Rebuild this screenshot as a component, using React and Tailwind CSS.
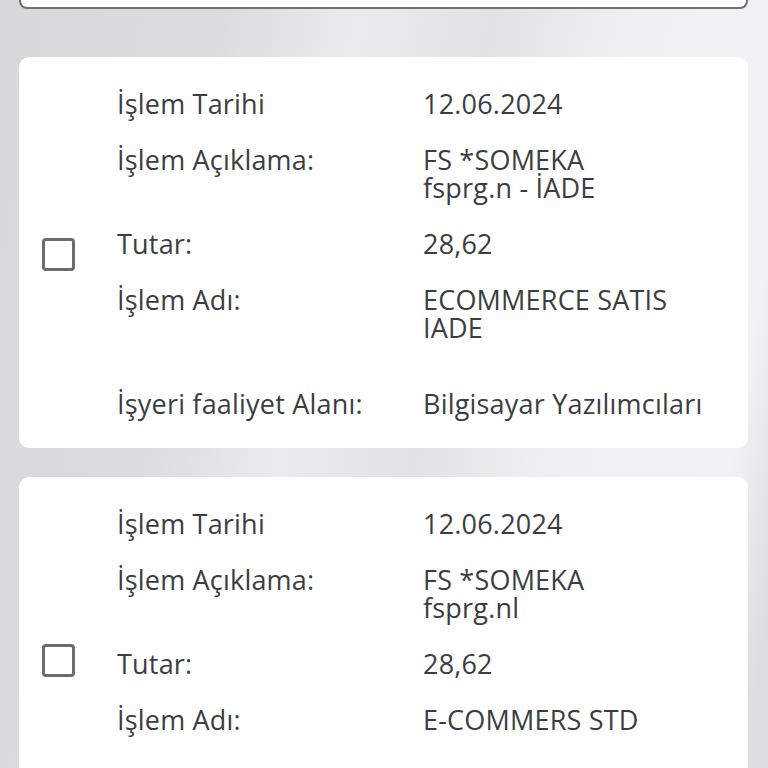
import React from "react";

const font = { fontFamily: "'Open Sans', 'Noto Sans', sans-serif" };

function Card({ rows }) {
  return (
    <div className="flex items-center rounded-[10px] bg-white pt-[33px] pb-[30px]">
      <div className="flex w-[98px] shrink-0 justify-start pl-[23px]">
        <div className="h-[33px] w-[33px] rounded-[4px] border-[3px] border-[#6b6c6e]" />
      </div>
      <div className="grid flex-1 grid-cols-[306px_1fr]">
        {rows.map((r, i) => {
          const last = i === rows.length - 1;
          const mb = last ? "mb-0" : r.extra ? "mb-[48px]" : "mb-[28px]";
          return (
            <React.Fragment key={i}>
              <div className={`whitespace-nowrap text-[27px] font-medium leading-[28px] tracking-[0.2px] text-[#3b3e41] ${mb}`}>{r.label}</div>
              <div className={`whitespace-nowrap text-[27px] font-medium leading-[28px] tracking-[0.2px] text-[#3b3e41] ${mb}`}>{r.value}</div>
            </React.Fragment>
          );
        })}
      </div>
    </div>
  );
}

export default function App() {
  const card1 = [
    { label: "İşlem Tarihi", value: "12.06.2024" },
    { label: "İşlem Açıklama:", value: <>FS *SOMEKA<br />fsprg.n - İADE</> },
    { label: "Tutar:", value: "28,62" },
    { label: "İşlem Adı:", value: <>ECOMMERCE SATIS<br />IADE</>, extra: true },
    { label: "İşyeri faaliyet Alanı:", value: "Bilgisayar Yazılımcıları" },
  ];
  const card2 = [
    { label: "İşlem Tarihi", value: "12.06.2024" },
    { label: "İşlem Açıklama:", value: <>FS *SOMEKA<br />fsprg.nl</> },
    { label: "Tutar:", value: "28,62" },
    { label: "İşlem Adı:", value: "E-COMMERS STD", extra: true },
    { label: "İşyeri faaliyet Alanı:", value: "Bilgisayar Yazılımcıları" },
  ];
  return (
    <div
      style={font}
      className="h-[768px] overflow-hidden bg-[linear-gradient(100deg,#d6d8db_0%,#dadcdf_25%,#e9ebed_40%,#e0e2e5_55%,#eff0f2_70%,#f1f2f4_90%,#dbdde0_97%)] pl-[19px] pr-[20px]"
    >
      <div className="h-[9px] rounded-b-[8px] border-2 border-t-0 border-[#6f7072] bg-white" />
      <div className="mt-[48px] flex flex-col gap-[29px]">
        <Card rows={card1} />
        <Card rows={card2} />
      </div>
    </div>
  );
}
